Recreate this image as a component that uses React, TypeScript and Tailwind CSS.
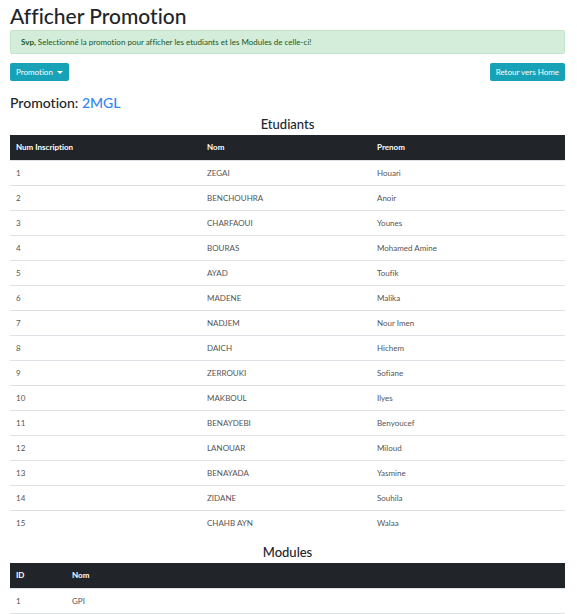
import React from "react";

const students: [number, string, string][] = [
  [1, "ZEGAI", "Houari"],
  [2, "BENCHOUHRA", "Anoir"],
  [3, "CHARFAOUI", "Younes"],
  [4, "BOURAS", "Mohamed Amine"],
  [5, "AYAD", "Toufik"],
  [6, "MADENE", "Malika"],
  [7, "NADJEM", "Nour Imen"],
  [8, "DAICH", "Hichem"],
  [9, "ZERROUKI", "Sofiane"],
  [10, "MAKBOUL", "Ilyes"],
  [11, "BENAYDEBI", "Benyoucef"],
  [12, "LANOUAR", "Miloud"],
  [13, "BENAYADA", "Yasmine"],
  [14, "ZIDANE", "Souhila"],
  [15, "CHAHB AYN", "Walaa"],
];

export default function App() {
  return (
    <div className="w-[577px] h-[614px] overflow-hidden bg-white pl-[10px] pr-[12px] text-[#212529] font-['Lato',sans-serif] [font-variant-ligatures:none]">
      <h1 className="h-[30px] pt-[3px] text-[21px] leading-[26px] font-medium">Afficher Promotion</h1>
      <div className="h-[24px] flex items-center px-[10px] bg-[#d4edda] border border-[#c3e6cb] rounded-[2px] text-[#155724] text-[8px]">
        <span className="font-bold mr-[2px]">Svp,</span> Selectionné la promotion pour afficher les etudiants et les Modules de celle-ci!
      </div>
      <div className="flex justify-between mt-[9px]">
        <button className="h-[18px] px-[6px] flex items-center gap-[4px] bg-[#17a2b8] text-white text-[8px] rounded-[2px]">
          Promotion
          <span className="w-0 h-0 border-l-[3px] border-r-[3px] border-t-[3px] border-l-transparent border-r-transparent border-t-white"></span>
        </button>
        <button className="h-[18px] px-[6px] flex items-center bg-[#17a2b8] text-white text-[8px] rounded-[2px]">Retour vers Home</button>
      </div>
      <h3 className="mt-[12px] text-[14px] leading-[20px] font-medium">
        Promotion: <span className="text-[#2f86f6]">2MGL</span>
      </h3>
      <h4 className="mt-[2px] mb-[2px] text-center text-[13px] leading-[18px] font-medium">Etudiants</h4>
      <table className="w-full border-collapse text-[8px] text-[#555]">
        <thead>
          <tr className="h-[25px] bg-[#212529] text-white">
            <th className="w-[191px] text-left pl-[6px] font-bold">Num Inscription</th>
            <th className="w-[170px] text-left pl-[6px] font-bold">Nom</th>
            <th className="text-left pl-[6px] font-bold">Prenom</th>
          </tr>
        </thead>
        <tbody>
          {students.map(([n, nom, prenom]) => (
            <tr key={n} className="h-[25px] border-t border-[#dee2e6]">
              <td className="pl-[6px]">{n}</td>
              <td className="pl-[6px]">{nom}</td>
              <td className="pl-[6px]">{prenom}</td>
            </tr>
          ))}
        </tbody>
      </table>
      <h4 className="text-center text-[13px] leading-[18px] font-medium mt-[8px] mb-[2px]">Modules</h4>
      <table className="w-full border-collapse text-[8px] text-[#555]">
        <thead>
          <tr className="h-[25px] bg-[#212529] text-white">
            <th className="w-[56px] text-left pl-[6px] font-bold">ID</th>
            <th className="text-left pl-[6px] font-bold">Nom</th>
          </tr>
        </thead>
        <tbody>
          <tr className="h-[25px] border-t border-b border-[#dee2e6]">
            <td className="pl-[6px]">1</td>
            <td className="pl-[6px]">GPI</td>
          </tr>
        </tbody>
      </table>
    </div>
  );
}
